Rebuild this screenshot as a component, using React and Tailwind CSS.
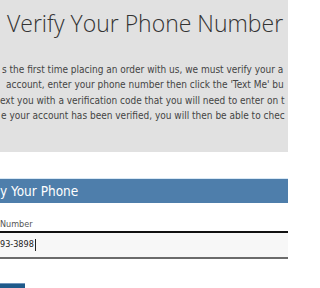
export default function App() {
  const body = "font-['DejaVu_Sans_Condensed','DejaVu_Sans','Liberation_Sans',sans-serif]";
  return (
    <div className={`w-[288px] h-[288px] overflow-hidden bg-white ${body}`}>
      <div className="bg-[#e1e1e1] h-[152px] pt-[6px]">
        <div className="pl-[7px] whitespace-nowrap text-[23px] leading-[34px] text-[#333] font-light font-['Open_Sans',sans-serif]">
          Verify Your Phone Number
        </div>
        <div className="mt-[22px] text-[10px] leading-[15.3px] text-[#444] whitespace-nowrap">
          <div className="pl-[2px]">s the first time placing an order with us, we must verify your a</div>
          <div className="pl-[6px]">account, enter your phone number then click the 'Text Me' bu</div>
          <div>ext you with a verification code that you will need to enter on t</div>
          <div className="pl-[1px]">e your account has been verified, you will then be able to chec</div>
        </div>
      </div>
      <div className="mt-[26px] border-t border-[#d8e8f5] bg-[#4e7eab] h-[25px] text-white text-[13.5px] leading-[24px] whitespace-nowrap">
        y Your Phone
      </div>
      <div className="mt-[15px] text-[9px] leading-[13px] text-[#555] whitespace-nowrap">Number</div>
      <div className="border-t-2 border-[#111] border-b-2 border-b-[#6b6b6b] bg-[#f7f7f7] h-[28px] flex items-center text-[9px] text-[#222]">
        <span>93-3898</span>
        <span className="ml-[1px] w-px h-[12px] bg-[#222]"></span>
      </div>
      <div className="mt-[24px] w-[25px] h-[10px] bg-[#1f5a8a] border-t border-[#6f95bb]"></div>
    </div>
  );
}
